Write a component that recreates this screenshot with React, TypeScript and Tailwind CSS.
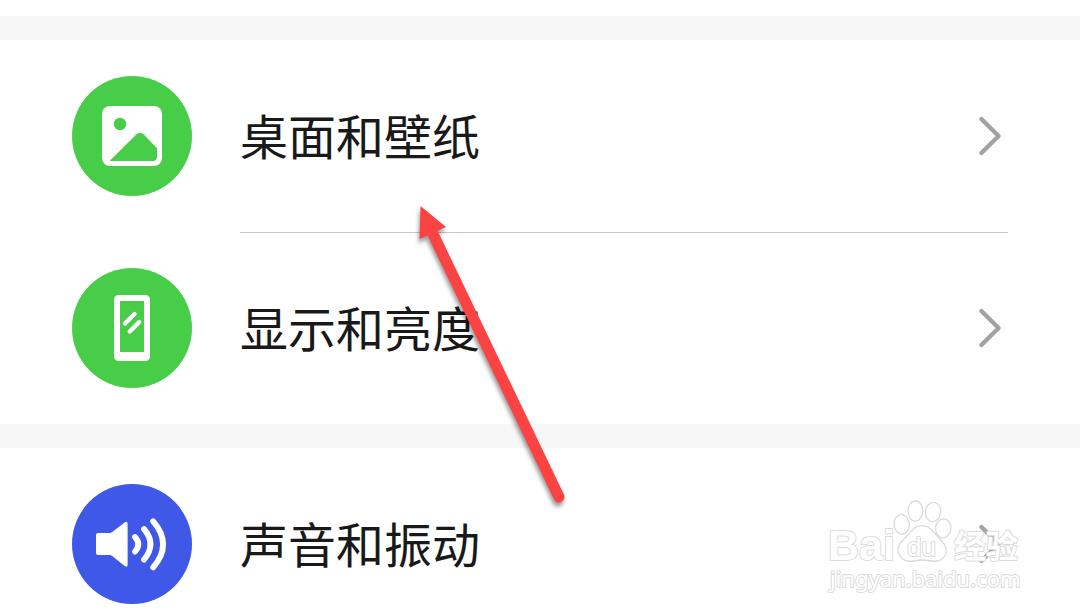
import type { ReactNode } from "react";

function WallpaperIcon() {
  return (
    <svg viewBox="0 0 120 120" className="size-full" aria-hidden="true">
      <rect x="30" y="30" width="60" height="60" rx="8" fill="#fff" />
      <circle cx="48" cy="48" r="6.2" fill="#48cd48" />
      <path
        d="M37.5 85 L64.5 58.3 Q68 55.3 71.5 58.3 L85 72.2 V80.5 Q85 85 80.5 85 Z"
        fill="#48cd48"
      />
    </svg>
  );
}

function DisplayIcon() {
  return (
    <svg viewBox="0 0 120 120" className="size-full" aria-hidden="true">
      <path
        fillRule="evenodd"
        d="M47 27 H73 Q78 27 78 32 V88 Q78 93 73 93 H47 Q42 93 42 88 V32 Q42 27 47 27 Z M48 33 V84 H72 V33 Z"
        fill="#fff"
      />
      <path
        d="M53 55.5 L62.5 46 M57.7 63.5 L67.2 54"
        stroke="#fff"
        strokeWidth="4.4"
        strokeLinecap="round"
      />
    </svg>
  );
}

function SoundIcon() {
  return (
    <svg viewBox="0 0 120 120" className="size-full" aria-hidden="true">
      <path
        d="M26 49 H37.5 Q39 49 40.2 48 L52.6 38.4 Q55.6 36.6 55.6 40 V80.5 Q55.6 84 52.6 82 L40.2 72 Q39 71 37.5 71 H26 Q24 71 24 69 V51 Q24 49 26 49 Z"
        fill="#fff"
      />
      <path
        d="M63 53 Q69.5 60.3 63 67.6 M72 45 Q85 60.3 72 75.6 M81.2 37.3 Q101 60.3 81.2 83.3"
        fill="none"
        stroke="#fff"
        strokeWidth="5.8"
        strokeLinecap="round"
      />
    </svg>
  );
}

function Chevron() {
  return (
    <svg viewBox="0 0 36 48" className="h-12 w-9 shrink-0" aria-hidden="true">
      <path
        d="M9.4 7 L26.6 24 L9.4 41"
        fill="none"
        stroke="#a2a2a2"
        strokeWidth="4.4"
        strokeLinecap="round"
        strokeLinejoin="round"
      />
    </svg>
  );
}

type RowProps = {
  label: string;
  icon: ReactNode;
  color: string;
  divided?: boolean;
};

function SettingRow({ label, icon, color, divided = false }: RowProps) {
  return (
    <li>
      <button type="button" className="flex h-48 w-full items-center gap-12 px-18 text-left">
        <span className={`size-30 shrink-0 rounded-full ${color}`}>{icon}</span>
        <span
          className={`flex flex-1 items-center justify-between self-stretch border-y border-b-transparent ${
            divided ? "border-t-[#c8c8c8]" : "border-t-transparent"
          }`}
        >
          <span className="pb-1 text-5xl">{label}</span>
          <Chevron />
        </span>
      </button>
    </li>
  );
}

function PointerArrow() {
  return (
    <svg
      viewBox="0 0 180 320"
      className="pointer-events-none absolute top-[196px] left-[400px] h-[320px] w-[180px] drop-shadow-[-1px_4px_2px_rgba(0,0,0,0.4)]"
      aria-hidden="true"
    >
      <path d="M33 38 L159 301" stroke="#fc4343" strokeWidth="11" strokeLinecap="round" />
      <path d="M20.5 10 L46 31 L19.5 43 Z" fill="#fc4343" />
    </svg>
  );
}

function Watermark() {
  return (
    <svg
      viewBox="0 0 210 110"
      className="pointer-events-none absolute top-[490px] left-[820px] h-[110px] w-[210px]"
      role="img"
      aria-label="Baidu 经验"
    >
      <g fill="#fff" fillOpacity="0.8" stroke="#dadada" strokeWidth="1.3">
        <ellipse cx="81.7" cy="34.3" rx="7.7" ry="9.8" transform="rotate(-6 81.7 34.3)" />
        <ellipse cx="95.3" cy="21" rx="7.3" ry="10.2" />
        <ellipse cx="113" cy="22" rx="7.6" ry="9.7" transform="rotate(8 113 22)" />
        <ellipse cx="123.3" cy="38.3" rx="7.7" ry="9.5" transform="rotate(6 123.3 38.3)" />
        <path d="M102 35.7 C94 35.7 91 42 86 47 C80 53 76 57 79 64 C82 72 90 72 97 70.5 Q102 69.5 108 70.5 C115 72 122 72 125.5 65 C128 58 124 53 118 47 C113 42 110 35.7 102 35.7 Z" />
      </g>
      <g
        fill="#fff"
        stroke="#dcdcdc"
        strokeWidth="2"
        strokeLinejoin="round"
        className="[paint-order:stroke]"
      >
        <text x="8" y="70" className="font-['Liberation_Sans',sans-serif] text-[43px] font-bold">
          Bai
        </text>
        <text x="87" y="66" className="font-['Liberation_Sans',sans-serif] text-[26px]">
          du
        </text>
        <text x="134" y="68" className="font-['Noto_Sans_CJK_SC',sans-serif] text-[32px] font-bold">
          经验
        </text>
        <text x="10" y="97" className="font-['Noto_Sans',sans-serif] text-[22px]">
          jingyan.baidu.com
        </text>
      </g>
    </svg>
  );
}

export default function App() {
  return (
    <main className="relative h-screen overflow-hidden bg-[#f6f6f6] font-['Noto_Sans_CJK_SC',sans-serif] text-[#191919]">
      <div className="flex flex-col gap-6">
        <div className="h-4 bg-white" />
        <ul className="bg-white">
          <SettingRow label="桌面和壁纸" icon={<WallpaperIcon />} color="bg-[#48cd48]" />
          <SettingRow label="显示和亮度" icon={<DisplayIcon />} color="bg-[#48cd48]" divided />
        </ul>
        <ul className="bg-white">
          <SettingRow label="声音和振动" icon={<SoundIcon />} color="bg-[#3f58e8]" />
        </ul>
      </div>
      <PointerArrow />
      <Watermark />
    </main>
  );
}
